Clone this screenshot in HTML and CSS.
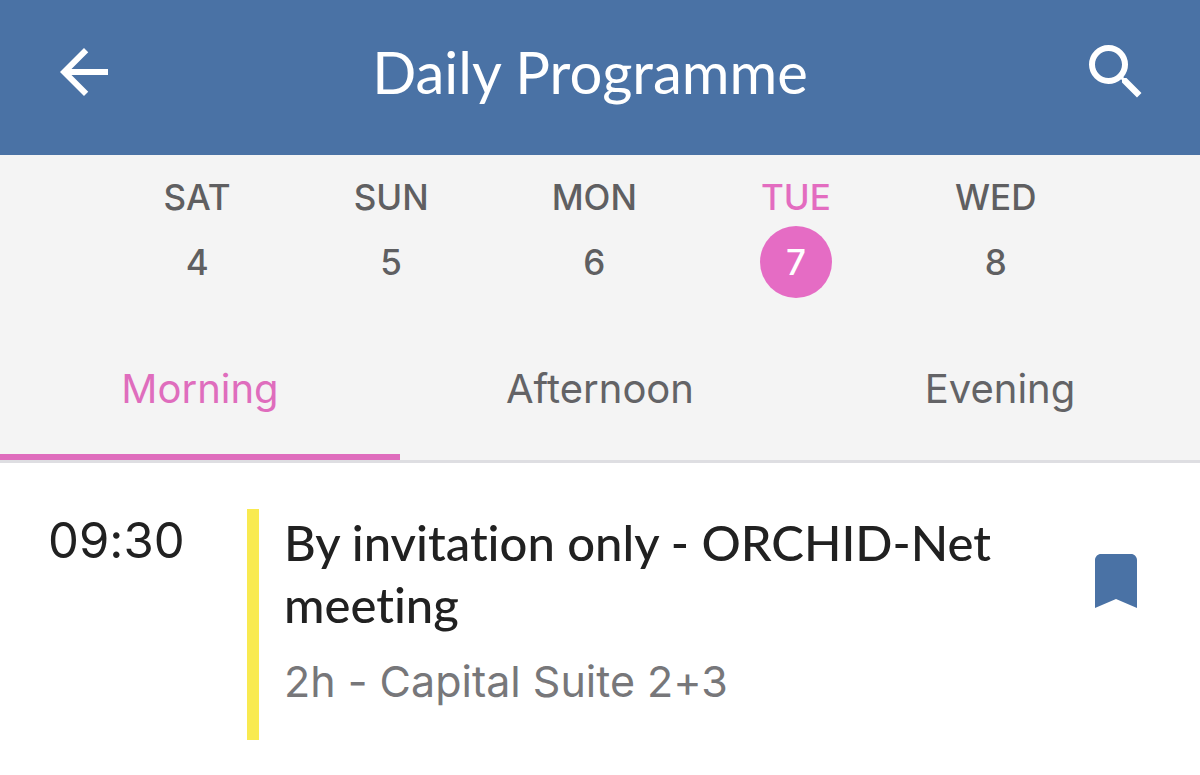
FILE: index.html
```html
<!DOCTYPE html>
<html lang="en">
<head>
  <meta charset="UTF-8">
  <meta name="viewport" content="width=device-width, initial-scale=1">
  <title>Daily Programme</title>
  <link rel="stylesheet" href="styles.css">
</head>
<body>

  <header class="app-bar">
    <button class="icon-btn" aria-label="Back">
      <svg viewBox="0 0 24 24"><path d="M20 11H7.83l5.59-5.59L12 4l-8 8 8 8 1.41-1.41L7.83 13H20v-2z"/></svg>
    </button>
    <h1>Daily Programme</h1>
    <button class="icon-btn" aria-label="Search">
      <svg viewBox="0 0 24 24"><path d="M15.5 14h-.79l-.28-.27A6.471 6.471 0 0 0 16 9.500 6.500 6.500 0 1 0 9.500 16c1.610 0 3.090-.59 4.230-1.570l.27.28v.79l5 4.990L20.490 19l-4.990-5zm-6 0C7.010 14 5 11.990 5 9.500S7.010 5 9.500 5 14 7.010 14 9.500 11.990 14 9.500 14z"/></svg>
    </button>
  </header>

  <div class="filters">
    <nav class="days" aria-label="Days">
      <button class="day">SAT <span class="date">4</span></button>
      <button class="day">SUN <span class="date">5</span></button>
      <button class="day">MON <span class="date">6</span></button>
      <button class="day active">TUE <span class="date">7</span></button>
      <button class="day">WED <span class="date">8</span></button>
    </nav>
    <nav class="tabs" aria-label="Time of day">
      <button class="tab active">Morning</button>
      <button class="tab">Afternoon</button>
      <button class="tab">Evening</button>
    </nav>
  </div>

  <main>
    <article class="session">
      <time class="time">09:30</time>
      <div class="details">
        <h2>By invitation only - ORCHID-Net meeting</h2>
        <p>2h - Capital Suite 2+3</p>
      </div>
      <button class="icon-btn bookmark" aria-label="Bookmark">
        <svg viewBox="0 0 24 24"><path d="M17 3H7c-1.100 0-2 .9-2 2v16l7-3 7 3V5c0-1.100-.9-2-2-2z"/></svg>
      </button>
    </article>
  </main>

</body>
</html>
```

FILE: styles.css
```css
body {
  margin: 0;
  background: #fff;
  color: #212121;
  font-family: Inter, "Liberation Sans", sans-serif;
  font-variant-ligatures: none;
}
h1, h2, p {
  margin: 0;
}
button {
  padding: 0;
  border: none;
  background: none;
  font-family: inherit;
  cursor: pointer;
}

/* top bar */
.app-bar {
  display: flex;
  align-items: center;
  justify-content: space-between;
  padding: 36px 48px 47px;
  background: #4a72a5;
  color: #fff;
}
.app-bar h1 {
  padding-right: 20px;
  font-family: Lato, sans-serif;
  font-size: 58px;
  font-weight: 400;
  line-height: 72px;
}
.icon-btn {
  flex: none;
  width: 72px;
  height: 72px;
  color: inherit;
}
.icon-btn svg {
  display: block;
  fill: currentColor;
}

/* day and time filters */
.filters {
  background: #f4f4f4;
  border-bottom: 3px solid #dedee2;
}
.days {
  display: flex;
  justify-content: center;
  gap: 123px;
  padding-top: 18px;
}
.day {
  display: flex;
  flex-direction: column;
  align-items: center;
  gap: 5px;
  color: #5f5f61;
  font-size: 35px;
  font-weight: 500;
  line-height: 48px;
}
.date {
  line-height: 72px;
}
.day.active {
  color: #e36cc0;
}
.day.active .date {
  width: 72px;
  border-radius: 50%;
  background: #e56cc4;
  color: #fff;
}
.tabs {
  display: grid;
  grid-template-columns: repeat(3, 1fr);
  margin-top: 24px;
}
.tab {
  padding: 42px 0 40px;
  border-bottom: 6px solid transparent;
  color: #636366;
  font-size: 40px;
  line-height: 50px;
}
.tab.active {
  color: #df6dbd;
  border-color: #df6dbd;
}

/* programme entries */
.session {
  display: flex;
  align-items: flex-start;
  padding: 46px 48px 35px;
}
.time {
  flex: none;
  width: 199px;
  font-size: 49px;
  line-height: 64px;
}
.details {
  flex: 1;
  padding: 2px 60px 28px 25px;
  border-left: 12px solid #f9ea50;
}
.details h2 {
  font-family: Lato, sans-serif;
  font-size: 49px;
  font-weight: 500;
  line-height: 62px;
}
.details p {
  margin-top: 16px;
  color: #77777a;
  font-size: 43px;
  line-height: 61px;
}
.bookmark {
  margin-top: 36px;
  color: #4a72a5;
}
```
